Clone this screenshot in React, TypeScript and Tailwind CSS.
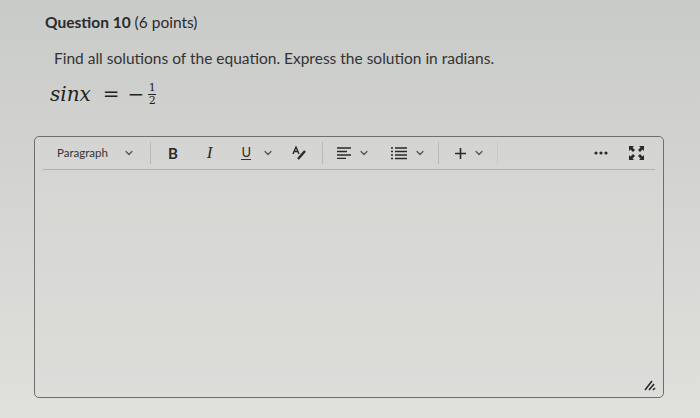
import { ChevronDown } from 'lucide-react'

const sep = 'h-[22px] w-px bg-[#b9bab6]'
const serif = '"DejaVu Serif", "Liberation Serif", serif'

function Chev() {
  return <ChevronDown className="h-3 w-3 text-[#555]" strokeWidth={2.5} />
}

export default function App() {
  return (
    <div
      className="h-[418px] w-[700px] overflow-hidden bg-linear-to-b from-[#c9cbc9] via-[#d5d6d3] to-[#e0e1dc] text-[#2b2b2b]"
      style={{ fontFamily: 'Lato, "Noto Sans", sans-serif' }}
    >
      <div className="pl-[45px] pt-[12px]">
        <h2 className="text-[15.5px] leading-[20px]">
          <span className="font-bold">Question 10</span> (6 points)
        </h2>
        <p className="mt-[16px] pl-[9px] text-[15.5px] leading-[20px] text-[#333]">
          Find all solutions of the equation. Express the solution in radians.
        </p>
        <div className="mt-[11px] flex items-center pl-[5px] text-[20px] text-[#222]">
          <span style={{ fontFamily: serif, fontStyle: 'italic' }}>sinx</span>
          <span className="ml-[12px]" style={{ fontFamily: serif }}>=</span>
          <span className="ml-[8px]" style={{ fontFamily: serif }}>−</span>
          <span
            className="ml-[4px] flex flex-col items-center text-[11px] leading-[12px]"
            style={{ fontFamily: serif }}
          >
            <span>1</span>
            <span className="h-px w-[8px] bg-[#222]"></span>
            <span>2</span>
          </span>
        </div>
      </div>

      <div className="mt-[27px] ml-[34px] h-[262px] w-[630px] rounded-[5px] border border-[#6e6f6c] bg-[#d9dad6]/40">
        <div className="mx-[8px] flex h-[33px] items-center border-b border-[#b3b4b0] text-[#2a2a2a]">
          <span className="ml-[14px] text-[11.5px] text-[#333]">Paragraph</span>
          <span className="ml-[15px]"><Chev /></span>
          <span className={`ml-[15px] ${sep}`}></span>
          <span className="ml-[17px] text-[15px] font-bold">B</span>
          <span className="ml-[29px] text-[17px] italic" style={{ fontFamily: '"Liberation Serif", serif' }}>
            I
          </span>
          <span className="ml-[29px] border-b-[1.5px] border-[#333] text-[13px] leading-[13px]">U</span>
          <span className="ml-[11px]"><Chev /></span>
          <svg className="ml-[18px]" width="15" height="14" viewBox="0 0 15 14">
            <path d="M1 8 L4 1 L7 8 M2.2 5.5 H5.8" fill="none" stroke="#2a2a2a" strokeWidth="1.4" />
            <path d="M6 13 L13 5" stroke="#2a2a2a" strokeWidth="2.4" />
          </svg>
          <span className={`ml-[15px] ${sep}`}></span>
          <svg className="ml-[14px]" width="14" height="12" viewBox="0 0 14 12">
            <path d="M0 1 H14 M0 4.5 H10 M0 8 H14 M0 11.5 H9" stroke="#2a2a2a" strokeWidth="1.3" />
          </svg>
          <span className="ml-[7px]"><Chev /></span>
          <svg className="ml-[21px]" width="16" height="13" viewBox="0 0 16 13">
            <path d="M0 1 H2 M0 4.5 H2 M0 8 H2 M0 11.5 H2" stroke="#2a2a2a" strokeWidth="1.4" />
            <path d="M4 1 H16 M4 4.5 H16 M4 8 H16 M4 11.5 H16" stroke="#2a2a2a" strokeWidth="1.3" />
          </svg>
          <span className="ml-[7px]"><Chev /></span>
          <span className={`ml-[12px] ${sep}`}></span>
          <svg className="ml-[16px]" width="11" height="11" viewBox="0 0 11 11">
            <path d="M5.5 0 V11 M0 5.5 H11" stroke="#2a2a2a" strokeWidth="1.6" />
          </svg>
          <span className="ml-[7px]"><Chev /></span>
          <span className="ml-[12px] h-[22px] w-px bg-[#c9cac6]"></span>
          <svg className="ml-[96px]" width="14" height="4" viewBox="0 0 14 4">
            <circle cx="2" cy="2" r="1.6" fill="#2a2a2a" />
            <circle cx="7" cy="2" r="1.6" fill="#2a2a2a" />
            <circle cx="12" cy="2" r="1.6" fill="#2a2a2a" />
          </svg>
          <svg className="ml-[21px]" width="15" height="14" viewBox="0 0 15 14">
            <g fill="#2a2a2a">
              <path d="M0 0 H5 L3.5 1.5 L6 4 L4 6 L1.5 3.5 L0 5 Z" />
              <path d="M15 0 H10 L11.5 1.5 L9 4 L11 6 L13.5 3.5 L15 5 Z" />
              <path d="M0 14 H5 L3.5 12.5 L6 10 L4 8 L1.5 10.5 L0 9 Z" />
              <path d="M15 14 H10 L11.5 12.5 L9 10 L11 8 L13.5 10.5 L15 9 Z" />
            </g>
          </svg>
        </div>
        <div className="flex h-[227px] items-end justify-end pr-[7px] pb-[6px]">
          <svg width="12" height="11" viewBox="0 0 12 11">
            <path d="M1 10 L8 1 M5 10 L10 4 M9 10 L11 8" stroke="#2a2a2a" strokeWidth="1.6" />
          </svg>
        </div>
      </div>
    </div>
  )
}
